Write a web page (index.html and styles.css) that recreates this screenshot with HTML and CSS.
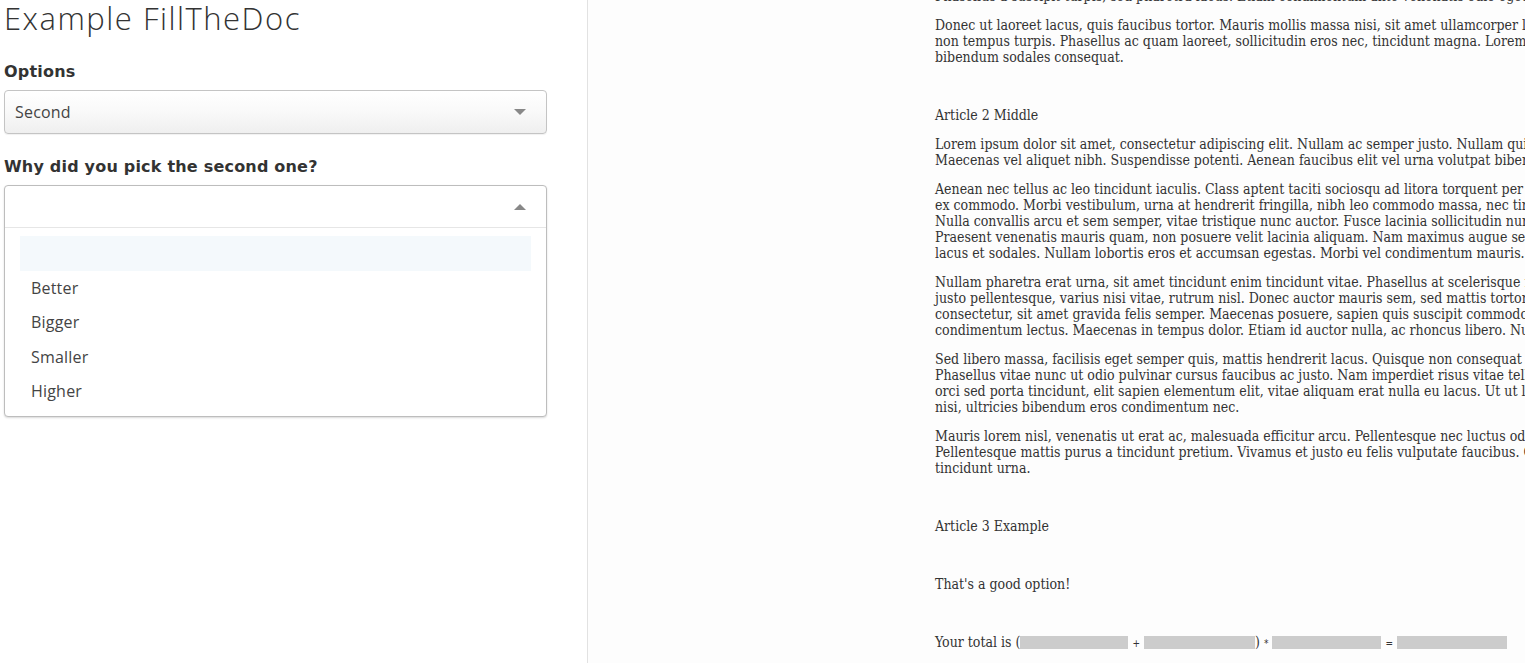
FILE: index.html
```html
<!DOCTYPE html>
<html lang="en">
<head>
<meta charset="utf-8">
<title>Example FillTheDoc</title>
<link rel="stylesheet" href="styles.css">
</head>
<body>
<div class="app">
  <aside class="sidebar">
    <h1 class="title">Example FillTheDoc</h1>
    <label class="field-label">Options</label>
    <div class="select">
      <span class="select-value">Second</span>
      <span class="arrow arrow-down"></span>
    </div>
    <label class="field-label field-label-2">Why did you pick the second one?</label>
    <div class="select select-open">
      <div class="select-head">
        <span class="select-value"></span>
        <span class="arrow arrow-up"></span>
      </div>
      <ul class="options">
        <li class="option option-active">&nbsp;</li>
        <li class="option">Better</li>
        <li class="option">Bigger</li>
        <li class="option">Smaller</li>
        <li class="option">Higher</li>
      </ul>
    </div>
  </aside>
  <main class="preview">
    <div class="doc">
      <p>Phasellus a suscipit turpis, sed pharetra lacus. Etiam condimentum ante venenatis odio eget porta. Integer vel sem a nisi tristique sagittis.</p>
      <p>Donec ut laoreet lacus, quis faucibus tortor. Mauris mollis massa nisi, sit amet ullamcorper lectus tempus et. Curabitur vitae urna<br>non tempus turpis. Phasellus ac quam laoreet, sollicitudin eros nec, tincidunt magna. Lorem ipsum dolor sit amet, consectetur<br>bibendum sodales consequat.</p>
      <p class="empty">&nbsp;</p>
      <p>Article 2 Middle</p>
      <p>Lorem ipsum dolor sit amet, consectetur adipiscing elit. Nullam ac semper justo. Nullam quis lorem eget lectus faucibus luctus.<br>Maecenas vel aliquet nibh. Suspendisse potenti. Aenean faucibus elit vel urna volutpat bibendum. Sed at lectus nec nunc.</p>
      <p>Aenean nec tellus ac leo tincidunt iaculis. Class aptent taciti sociosqu ad litora torquent per conubia nostra, per inceptos<br>ex commodo. Morbi vestibulum, urna at hendrerit fringilla, nibh leo commodo massa, nec tincidunt lorem nisl ac diam. Integer<br>Nulla convallis arcu et sem semper, vitae tristique nunc auctor. Fusce lacinia sollicitudin nunc, at ultricies ante pretium ac.<br>Praesent venenatis mauris quam, non posuere velit lacinia aliquam. Nam maximus augue sed sapien sodales, eget fringilla<br>lacus et sodales. Nullam lobortis eros et accumsan egestas. Morbi vel condimentum mauris.</p>
      <p>Nullam pharetra erat urna, sit amet tincidunt enim tincidunt vitae. Phasellus at scelerisque nisl, vel pulvinar lorem. Donec<br>justo pellentesque, varius nisi vitae, rutrum nisl. Donec auctor mauris sem, sed mattis tortor aliquet vel. Vestibulum<br>consectetur, sit amet gravida felis semper. Maecenas posuere, sapien quis suscipit commodo, lorem orci fermentum nisi, nec<br>condimentum lectus. Maecenas in tempus dolor. Etiam id auctor nulla, ac rhoncus libero. Nunc sit amet.</p>
      <p>Sed libero massa, facilisis eget semper quis, mattis hendrerit lacus. Quisque non consequat nunc. Praesent eu sapien id<br>Phasellus vitae nunc ut odio pulvinar cursus faucibus ac justo. Nam imperdiet risus vitae tellus tincidunt, ac fermentum<br>orci sed porta tincidunt, elit sapien elementum elit, vitae aliquam erat nulla eu lacus. Ut ut lectus sed lorem dictum<br>nisi, ultricies bibendum eros condimentum nec.</p>
      <p>Mauris lorem nisl, venenatis ut erat ac, malesuada efficitur arcu. Pellentesque nec luctus odio. Sed vel gravida nisl, et<br>Pellentesque mattis purus a tincidunt pretium. Vivamus et justo eu felis vulputate faucibus. Curabitur vitae lectus et ipsum<br>tincidunt urna.</p>
      <p class="empty">&nbsp;</p>
      <p>Article 3 Example</p>
      <p class="empty">&nbsp;</p>
      <p>That's a good option!</p>
      <p class="empty">&nbsp;</p>
      <p class="total">Your total is (<span class="blank"></span> <span class="op">+</span> <span class="blank blank-2"></span>) <span class="op">*</span> <span class="blank blank-3"></span> <span class="op">=</span> <span class="blank blank-4"></span></p>
    </div>
  </main>
</div>
</body>
</html>
```

FILE: styles.css
```css
* { box-sizing: border-box; }

html, body {
  margin: 0;
  padding: 0;
  height: 100%;
  background: #ffffff;
}

.app {
  display: flex;
  height: 663px;
  overflow: hidden;
}

.sidebar {
  flex: 0 0 588px;
  padding: 0 40px 0 4px;
  border-right: 1px solid #e2e2e2;
  background: #ffffff;
  font-family: "Open Sans", "DejaVu Sans", sans-serif;
  color: #333333;
}

.title {
  margin: 0;
  font-size: 31px;
  line-height: 36px;
  font-weight: 300;
  letter-spacing: 1.5px;
  color: #333333;
}

.field-label {
  display: block;
  margin: 26px 0 8px;
  font-family: "DejaVu Sans", "Open Sans", sans-serif;
  font-size: 16px;
  line-height: 20px;
  font-weight: 700;
  letter-spacing: 0.2px;
  color: #333333;
}

.field-label-2 {
  margin-top: 23px;
}

.select {
  position: relative;
  display: flex;
  align-items: center;
  height: 44px;
  padding: 0 20px 0 10px;
  border: 1px solid #c4c4c4;
  border-radius: 4px;
  background: linear-gradient(#ffffff 0%, #f9f9f9 50%, #efefef 100%);
  box-shadow: 0 1px 1px rgba(0, 0, 0, 0.06);
}

.select-value {
  flex: 1;
  font-size: 16px;
  color: #444444;
  letter-spacing: 0.2px;
}

.arrow {
  width: 0;
  height: 0;
  border-left: 6px solid transparent;
  border-right: 6px solid transparent;
}

.arrow-down {
  border-top: 6px solid #888888;
}

.arrow-up {
  border-bottom: 6px solid #888888;
}

.select-open {
  display: block;
  height: auto;
  padding: 0;
  background: #ffffff;
  border-color: #bdbdbd;
  box-shadow: 0 1px 2px rgba(0, 0, 0, 0.15);
}

.select-head {
  display: flex;
  align-items: center;
  height: 42px;
  padding: 0 20px 0 10px;
  border-bottom: 1px solid #e6e6e6;
}

.options {
  list-style: none;
  margin: 0;
  padding: 8px 15px 7px 15px;
}

.option {
  height: 34.5px;
  padding: 0 11px;
  font-size: 16px;
  line-height: 34.5px;
  color: #444444;
  letter-spacing: 0.2px;
}

.option-active {
  background: #f4f9fc;
}

.preview {
  flex: 1;
  overflow: hidden;
  background: #fdfdfd;
}

.doc {
  margin-top: -12px;
  padding-left: 347px;
  font-family: "DejaVu Serif", "Liberation Serif", serif;
  font-stretch: condensed;
  font-size: 14px;
  line-height: 16px;
  color: #333333;
  white-space: nowrap;
}

.doc p {
  margin: 0 0 13px;
}

.blank {
  display: inline-block;
  width: 108px;
  height: 13px;
  background: #cccccc;
  vertical-align: -2px;
}

.blank-2 { width: 111px; }
.blank-3 { width: 109px; }
.blank-4 { width: 110px; }

.op {
  font-family: "DejaVu Sans", sans-serif;
  font-size: 10px;
}
```
